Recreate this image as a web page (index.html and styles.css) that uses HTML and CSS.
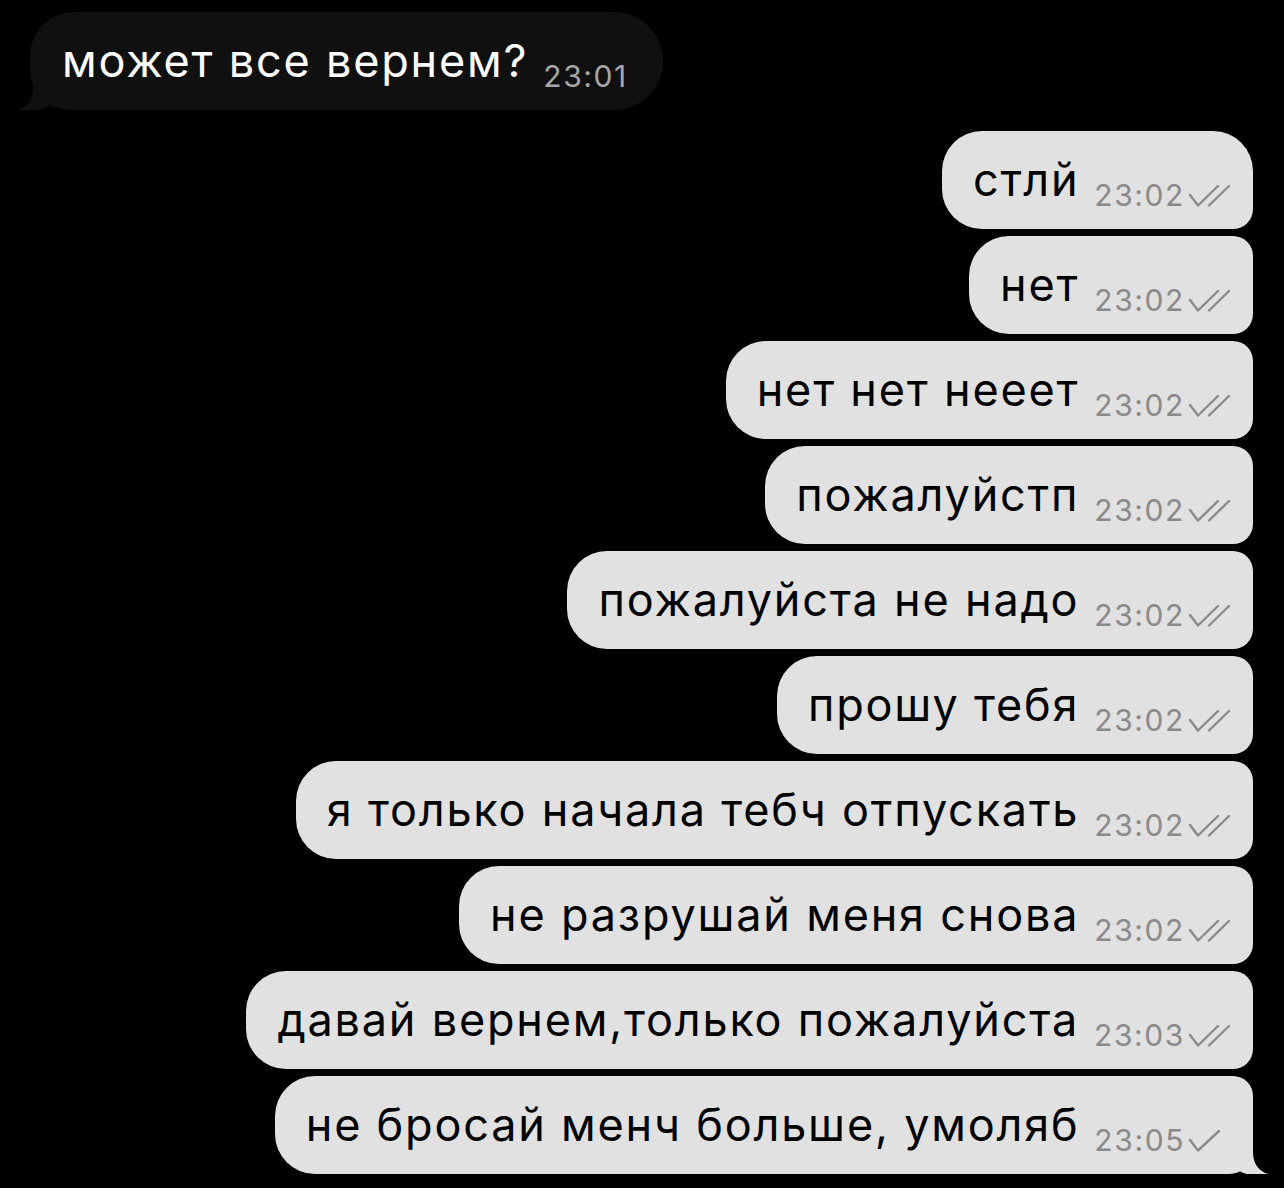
FILE: index.html
```html
<!DOCTYPE html>
<html lang="ru">
<head>
<meta charset="utf-8">
<title>Чат</title>
<link rel="stylesheet" href="styles.css">
</head>
<body>
<main class="chat">
  <div class="msg msg-in">
    <span class="msg-text">может все вернем?</span><span class="msg-meta"><span class="msg-time">23:01</span></span>
    <svg class="tail tail-in" width="40" height="30" viewBox="0 0 40 30"><path d="M15 0 L15 8 C15 20 9 27 0 30 L21 30 C26 29 31 26 36 21 L36 0 Z"/></svg>
  </div>

  <div class="msg msg-out first">
    <span class="msg-text">стлй</span><span class="msg-meta"><span class="msg-time">23:02</span><svg class="ticks" width="44" height="22" viewBox="0 0 44 22"><path d="M2 10 L10 20.5 L30 1 M21 20.5 L41 1"/></svg></span>
  </div>
  <div class="msg msg-out">
    <span class="msg-text">нет</span><span class="msg-meta"><span class="msg-time">23:02</span><svg class="ticks" width="44" height="22" viewBox="0 0 44 22"><path d="M2 10 L10 20.5 L30 1 M21 20.5 L41 1"/></svg></span>
  </div>
  <div class="msg msg-out">
    <span class="msg-text">нет нет нееет</span><span class="msg-meta"><span class="msg-time">23:02</span><svg class="ticks" width="44" height="22" viewBox="0 0 44 22"><path d="M2 10 L10 20.5 L30 1 M21 20.5 L41 1"/></svg></span>
  </div>
  <div class="msg msg-out">
    <span class="msg-text">пожалуйстп</span><span class="msg-meta"><span class="msg-time">23:02</span><svg class="ticks" width="44" height="22" viewBox="0 0 44 22"><path d="M2 10 L10 20.5 L30 1 M21 20.5 L41 1"/></svg></span>
  </div>
  <div class="msg msg-out">
    <span class="msg-text">пожалуйста не надо</span><span class="msg-meta"><span class="msg-time">23:02</span><svg class="ticks" width="44" height="22" viewBox="0 0 44 22"><path d="M2 10 L10 20.5 L30 1 M21 20.5 L41 1"/></svg></span>
  </div>
  <div class="msg msg-out">
    <span class="msg-text">прошу тебя</span><span class="msg-meta"><span class="msg-time">23:02</span><svg class="ticks" width="44" height="22" viewBox="0 0 44 22"><path d="M2 10 L10 20.5 L30 1 M21 20.5 L41 1"/></svg></span>
  </div>
  <div class="msg msg-out">
    <span class="msg-text">я только начала тебч отпускать</span><span class="msg-meta"><span class="msg-time">23:02</span><svg class="ticks" width="44" height="22" viewBox="0 0 44 22"><path d="M2 10 L10 20.5 L30 1 M21 20.5 L41 1"/></svg></span>
  </div>
  <div class="msg msg-out">
    <span class="msg-text">не разрушай меня снова</span><span class="msg-meta"><span class="msg-time">23:02</span><svg class="ticks" width="44" height="22" viewBox="0 0 44 22"><path d="M2 10 L10 20.5 L30 1 M21 20.5 L41 1"/></svg></span>
  </div>
  <div class="msg msg-out">
    <span class="msg-text">давай вернем,только пожалуйста</span><span class="msg-meta"><span class="msg-time">23:03</span><svg class="ticks" width="44" height="22" viewBox="0 0 44 22"><path d="M2 10 L10 20.5 L30 1 M21 20.5 L41 1"/></svg></span>
  </div>
  <div class="msg msg-out last">
    <span class="msg-text">не бросай менч больше, умоляб</span><span class="msg-meta"><span class="msg-time">23:05</span><svg class="ticks" width="44" height="22" viewBox="0 0 44 22"><path d="M2 10 L10 20.5 L31 1"/></svg></span>
    <svg class="tail tail-out" width="40" height="30" viewBox="0 0 40 30"><path d="M25 0 L25 8 C25 20 31 27 40 30 L19 30 C14 29 9 26 4 21 L4 0 Z"/></svg>
  </div>
</main>
</body>
</html>
```

FILE: styles.css
```css
html, body {
  margin: 0;
  background: #000;
}

.chat {
  display: flex;
  flex-direction: column;
  align-items: flex-end;
  gap: 7px;
  padding: 12px 31px 0 30px;
  font-family: Inter, "Liberation Sans", Arial, sans-serif;
}

.msg {
  position: relative;
  box-sizing: border-box;
  height: 98px;
  line-height: 98px;
  white-space: nowrap;
  font-size: 45px;
}

.msg-text {
  letter-spacing: 1.8px;
}

.msg-meta {
  display: inline-block;
  margin-left: 15px;
  vertical-align: -10px;
  line-height: 1;
}

.msg-time {
  font-size: 30px;
  letter-spacing: 1.6px;
}

.ticks {
  display: inline-block;
  vertical-align: -1px;
  margin-left: 3px;
  fill: none;
  stroke: currentColor;
  stroke-width: 2.4;
  stroke-linecap: round;
  stroke-linejoin: round;
}

/* incoming message */
.msg-in {
  align-self: flex-start;
  margin-bottom: 14px;
  padding: 0 35px 0 32px;
  background: #101010;
  color: #fff;
  border-radius: 44px 49px 49px 40px;
}

.msg-in .msg-meta {
  color: #a6a6a6;
}

/* outgoing messages */
.msg-out {
  padding: 0 21px 0 31px;
  background: #e1e1e1;
  color: #000;
  border-radius: 40px 20px 20px 40px;
}

.msg-out .msg-meta {
  color: #8a8a8a;
}

.msg-out.first {
  border-top-right-radius: 40px;
}

.msg-out.last {
  border-bottom-right-radius: 24px;
}

.tail {
  position: absolute;
  bottom: 0;
}

.tail-out {
  right: -15px;
  fill: #e1e1e1;
}

.tail-in {
  left: -12px;
  fill: #101010;
}
```
